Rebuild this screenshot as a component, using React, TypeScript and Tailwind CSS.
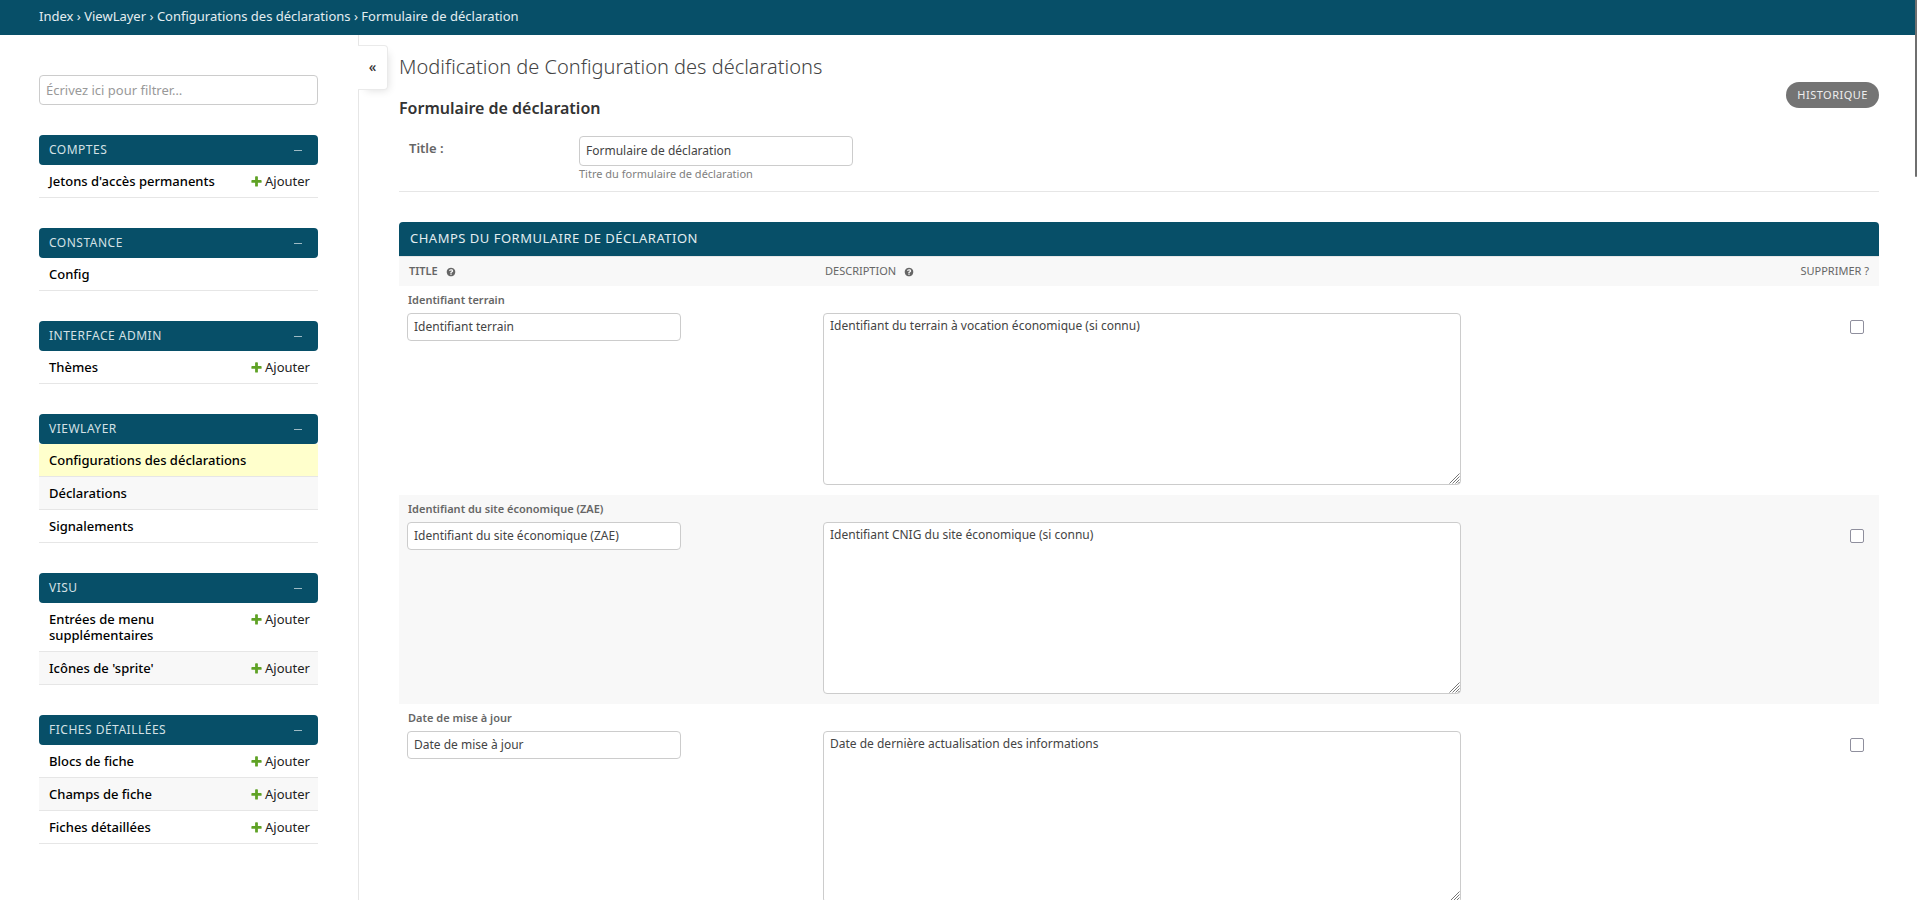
import React from "react";

const sections = [
  { title: "Comptes", items: [{ label: "Jetons d'accès permanents", add: true }] },
  { title: "Constance", items: [{ label: "Config" }] },
  { title: "Interface admin", items: [{ label: "Thèmes", add: true }] },
  {
    title: "ViewLayer",
    items: [
      { label: "Configurations des déclarations", active: true },
      { label: "Déclarations" },
      { label: "Signalements" },
    ],
  },
  {
    title: "Visu",
    items: [
      { label: "Entrées de menu supplémentaires", add: true },
      { label: "Icônes de 'sprite'", add: true },
    ],
  },
  {
    title: "Fiches détaillées",
    items: [
      { label: "Blocs de fiche", add: true },
      { label: "Champs de fiche", add: true },
      { label: "Fiches détaillées", add: true },
    ],
  },
] as { title: string; items: { label: string; add?: boolean; active?: boolean }[] }[];

const rows = [
  { title: "Identifiant terrain", description: "Identifiant du terrain à vocation économique (si connu)" },
  { title: "Identifiant du site économique (ZAE)", description: "Identifiant CNIG du site économique (si connu)" },
  { title: "Date de mise à jour", description: "Date de dernière actualisation des informations" },
];

function PlusIcon() {
  return (
    <svg viewBox="0 0 1792 1792" className="size-[13px] fill-[#5fa225]" aria-hidden="true">
      <path d="M1600 796v192q0 40-28 68t-68 28h-416v416q0 40-28 68t-68 28h-192q-40 0-68-28t-28-68v-416h-416q-40 0-68-28t-28-68v-192q0-40 28-68t68-28h416v-416q0-40 28-68t68-28h192q40 0 68 28t28 68v416h416q40 0 68 28t28 68z" />
    </svg>
  );
}

function HelpIcon() {
  return (
    <svg viewBox="0 0 1792 1792" className="mt-px size-[10px] fill-[#666]" aria-hidden="true">
      <path d="M1024 1376v-192q0-14-9-23t-23-9h-192q-14 0-23 9t-9 23v192q0 14 9 23t23 9h192q14 0 23-9t9-23zm256-672q0-88-55.5-163t-138.5-116-170-41q-243 0-371 213-15 24 8 42l132 100q7 6 19 6 16 0 25-12 53-68 86-92 34-24 86-24 48 0 85.5 26t37.5 59q0 38-20 61t-68 45q-63 28-115.5 86.5t-52.5 125.5v36q0 14 9 23t23 9h192q14 0 23-9t9-23q0-19 21.5-49.5t54.5-49.5q32-18 49-28.5t46-35 44.5-48 28-60.5 12.5-81zm384 192q0 209-103 385.5t-279.5 279.5-385.5 103-385.5-103-279.5-279.5-103-385.5 103-385.5 279.5-279.5 385.5-103 385.5 103 279.5 279.5 103 385.5z" />
    </svg>
  );
}

function Grip() {
  return (
    <svg
      viewBox="0 0 11 11"
      className="pointer-events-none absolute right-px bottom-px size-[11px]"
      stroke="#777"
      strokeWidth="1"
      aria-hidden="true"
    >
      <path d="M0.5 10.5 L10.5 0.5 M3.5 10.5 L10.5 3.5 M6.5 10.5 L10.5 6.5 M9 10.5 L10.5 9" />
    </svg>
  );
}

function Breadcrumbs() {
  return (
    <nav className="h-[35px] bg-[#074f68] px-[39px] pt-2 text-[13px] leading-4 text-[#e3edf0]">
      <a href="#">Index</a> › <a href="#">ViewLayer</a> › <a href="#">Configurations des déclarations</a> › Formulaire de
      déclaration
    </nav>
  );
}

function Sidebar() {
  return (
    <aside className="w-[359px] shrink-0 border-r border-[#e6e6e6] pt-10 pr-10 pl-[39px]">
      <input
        type="search"
        aria-label="Filtrer"
        placeholder="Écrivez ici pour filtrer…"
        className="mb-[30px] block h-[30px] w-full rounded border border-[#ccc] px-1.5 placeholder:text-[#999]"
      />
      {sections.map((section) => (
        <section key={section.title} className="mb-[30px]">
          <h2 className="flex h-[30px] items-center justify-between rounded bg-[#074f68] pr-4 pl-2.5 text-xs text-[#d4e1e5]">
            <a href="#" className="tracking-[0.5px] uppercase">
              {section.title}
            </a>
            <button type="button" aria-label="Replier" className="h-4">
              <span className="block h-px w-2 bg-[#9dbac4]" />
            </button>
          </h2>
          <ul>
            {section.items.map((item, i) => (
              <li
                key={item.label}
                className={`flex items-start justify-between border-b border-[#e6e6e6] py-2 pr-2 pl-2.5 leading-4 ${
                  item.active ? "bg-[#ffffcc]" : i % 2 ? "bg-[#f8f8f8]" : ""
                }`}
              >
                <a href="#" className={`font-medium text-black ${item.add ? "max-w-[170px]" : ""}`}>
                  {item.label}
                </a>
                {item.add && (
                  <a href="#" className="flex items-center gap-0.5 text-[#222]">
                    <PlusIcon />
                    Ajouter
                  </a>
                )}
              </li>
            ))}
          </ul>
        </section>
      ))}
    </aside>
  );
}

function FieldsTable() {
  return (
    <section>
      <h2 className="flex h-[34px] items-center rounded-t bg-[#074f68] px-[11px] tracking-[0.5px] text-[#e3edf0] uppercase">
        Champs du formulaire de déclaration
      </h2>
      <table className="w-full table-fixed border-separate border-spacing-0">
        <thead>
          <tr className="h-[30px] bg-[#f8f8f8] text-left text-[11px] text-[#666] uppercase">
            <th className="w-[416px] border-t border-[#e6e6e6] px-2.5 font-semibold">
              <span className="flex items-center gap-2">
                Title <HelpIcon />
              </span>
            </th>
            <th className="border-t border-[#e6e6e6] px-2.5 font-normal">
              <span className="flex items-center gap-2">
                Description <HelpIcon />
              </span>
            </th>
            <th className="w-[100px] border-t border-[#e6e6e6] px-2.5 text-right font-normal">Supprimer ?</th>
          </tr>
        </thead>
        <tbody>
          {rows.map((row, i) => (
            <tr key={row.title} className="align-top even:bg-[#f8f8f8]">
              <td className="px-2 pb-2.5">
                <p className="h-[27px] pt-1.5 pl-px text-[11px] leading-4 font-semibold text-[#666]">{row.title}</p>
                <input
                  type="text"
                  aria-label={`Title ${i + 1}`}
                  defaultValue={row.title}
                  className="block h-7 w-[274px] rounded border border-[#ccc] bg-white px-1.5 pb-0.5 text-xs"
                />
              </td>
              <td className="px-2 pt-[27px] pb-2.5">
                <div className="relative w-[638px] max-w-full">
                  <textarea
                    aria-label={`Description ${i + 1}`}
                    defaultValue={row.description}
                    className="block h-[172px] w-full resize-none rounded border border-[#ccc] bg-white px-1.5 py-1 text-xs leading-4"
                  />
                  <Grip />
                </div>
              </td>
              <td className="px-[15px] pt-[34px]">
                <input
                  type="checkbox"
                  aria-label={`Supprimer ${row.title}`}
                  className="ml-auto block size-3.5 appearance-none rounded-xs border border-[#8f8f9d] bg-white checked:bg-[#074f68]"
                />
              </td>
            </tr>
          ))}
        </tbody>
      </table>
    </section>
  );
}

export default function App() {
  return (
    <div className="h-screen overflow-x-hidden overflow-y-auto bg-white font-['Noto_Sans',sans-serif] text-[13px] text-[#444] [scrollbar-width:none]">
      <Breadcrumbs />
      <div className="flex">
        <Sidebar />
        <main className="relative min-w-0 flex-1 pt-5 pr-[38px] pl-10">
          <button
            type="button"
            aria-label="Replier la navigation"
            className="absolute top-2.5 -left-px h-[45px] w-[30px] rounded-r border border-l-0 border-[#eaeaea] bg-white pb-0.5 text-sm font-medium text-[#333] shadow-[4px_4px_8px_-4px_#dbdbdb]"
          >
            «
          </button>
          <h1 className="text-xl leading-6 font-light">Modification de Configuration des déclarations</h1>
          <div className="flex justify-between">
            <h2 className="mt-[17px] text-base leading-6 font-semibold text-[#333]">Formulaire de déclaration</h2>
            <a
              href="#"
              className="mt-[3px] flex h-[26px] items-center rounded-full bg-[#747474] px-[11px] text-[11px] tracking-[0.5px] text-[#eee] uppercase"
            >
              Historique
            </a>
          </div>
          <div className="mt-4 mb-[30px] flex border-b border-[#e6e6e6] pb-[9px] pl-2.5">
            <label htmlFor="id_title" className="w-[170px] pt-1 leading-4 font-semibold text-[#666]">
              Title :
            </label>
            <div>
              <input
                id="id_title"
                type="text"
                defaultValue="Formulaire de déclaration"
                className="block h-[30px] w-[274px] rounded border border-[#ccc] px-1.5 pb-0.5 text-xs"
              />
              <p className="text-[11px] leading-4 text-[#808080]">Titre du formulaire de déclaration</p>
            </div>
          </div>
          <FieldsTable />
        </main>
      </div>
      <div className="fixed top-0 right-0 h-[177px] w-0.5 rounded-b-sm bg-[#6f6f6f]" />
    </div>
  );
}
